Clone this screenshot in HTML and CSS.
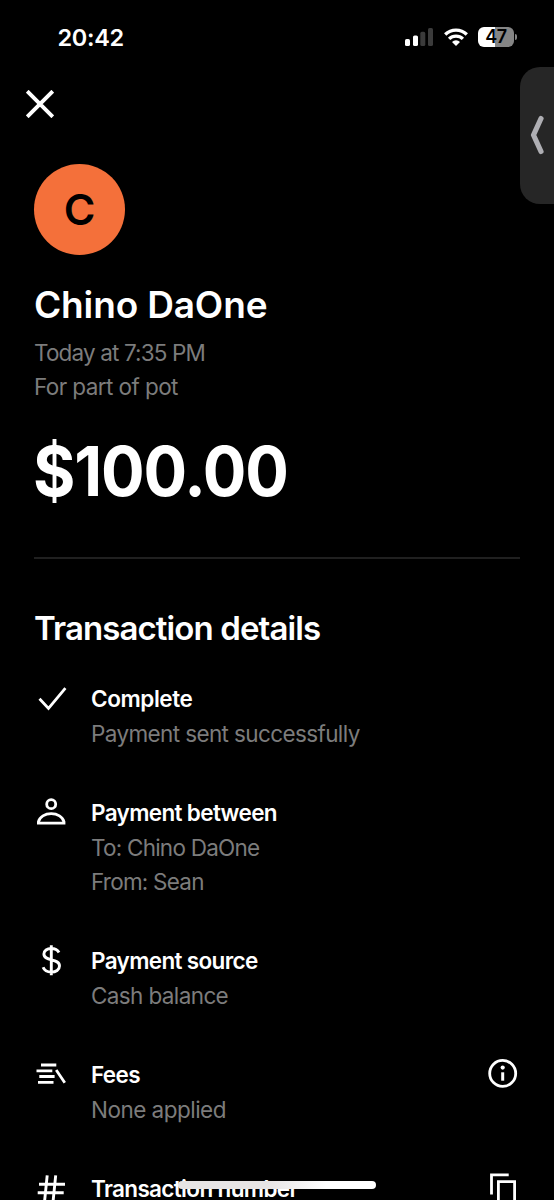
FILE: index.html
```html
<!DOCTYPE html>
<html lang="en">
<head>
<meta charset="utf-8">
<meta name="viewport" content="width=device-width, initial-scale=1">
<title>Transaction</title>
<link rel="stylesheet" href="styles.css">
</head>
<body>
<div class="screen">
  <header class="status">
    <span class="clock">20:42</span>
    <div class="indicators">
      <svg class="signal" width="28" height="18" viewBox="0 0 28 18" fill="#fff"><rect x="0" y="11" width="5" height="7" rx="1.6"/><rect x="8" y="7.5" width="5" height="10.5" rx="1.6"/><rect x="15.3" y="3.8" width="5" height="14.2" rx="1.6" fill="#3b3b3b"/><rect x="23" y="0" width="5" height="18" rx="1.6" fill="#3b3b3b"/></svg>
      <svg class="wifi" width="24" height="18" viewBox="0 0 24 18" fill="none" stroke="#fff" stroke-width="3.3"><path d="M1.2 6.5a15.3 15.3 0 0 1 21.6 0"/><path d="M5.1 10.9a9.8 9.8 0 0 1 13.8 0"/><path d="M12 18l-4-4a5.7 5.7 0 0 1 8 0z" fill="#fff" stroke="none"/></svg>
      <div class="battery"><span class="level">47</span><i class="cap"></i></div>
    </div>
  </header>
  <nav class="nav">
    <svg width="28" height="28" viewBox="0 0 28 28" stroke="#fff" stroke-width="3.9"><path d="M1.2 1.2l25.6 25.6M26.8 1.2L1.2 26.8"/></svg>
  </nav>
  <main class="content">
    <div class="avatar"><span>C</span></div>
    <h1 class="name">Chino DaOne</h1>
    <p class="sub when">Today at 7:35 PM</p>
    <p class="sub note">For part of pot</p>
    <div class="amount">$100.00</div>
    <hr class="rule">
    <h2 class="heading">Transaction details</h2>
    <ul class="list">
      <li class="item">
        <svg class="icon" width="34" height="34" viewBox="0 0 34 34" fill="none" stroke="#fff" stroke-width="2.8"><path d="M5.5 16.8l9 9.7L31.4 6.2"/></svg>
        <div class="text"><p class="label status-label">Complete</p><p class="sub">Payment sent successfully</p></div>
      </li>
      <li class="item">
        <svg class="icon" width="34" height="34" viewBox="0 0 34 34" fill="none" stroke="#fff" stroke-width="2.8"><circle cx="17.2" cy="8.2" r="4.5"/><path d="M4.4 27.2v-1.4C5.6 20.8 11 17.6 17.2 17.6S28.8 20.8 30 25.8v1.4z"/></svg>
        <div class="text"><p class="label">Payment between</p><p class="sub recipient">To: Chino DaOne</p><p class="sub sender">From: Sean</p></div>
      </li>
      <li class="item">
        <svg class="icon" width="34" height="34" viewBox="0 0 34 34" fill="none" stroke="#fff" stroke-width="2.9"><path d="M17.3 1.2v30M25 8.5C23.5 5.7 20.8 4.5 17.3 4.5c-4.2 0-7.4 2.2-7.4 5.6 0 7.8 15.6 3.8 15.6 12 0 3.6-3.6 6-8.2 6-4 0-6.9-1.5-8.2-4.8"/></svg>
        <div class="text"><p class="label">Payment source</p><p class="sub">Cash balance</p></div>
      </li>
      <li class="item">
        <svg class="icon" width="34" height="34" viewBox="0 0 34 34" fill="none" stroke="#fff" stroke-width="2.8"><path d="M7 7h15.3M2.5 12.8h15.8M5.3 18.5h15.3M4 24.3h15.5M22.2 12l8.6 12.7"/></svg>
        <div class="text"><p class="label">Fees</p><p class="sub fee-note">None applied</p></div>
        <svg class="action" width="34" height="34" viewBox="0 0 34 34" fill="none" stroke="#fff" stroke-width="2.8"><circle cx="16.7" cy="15.4" r="13"/><path d="M16.7 14.3v8.4" stroke-width="3"/><circle cx="16.7" cy="9.6" r="2.1" fill="#fff" stroke="none"/></svg>
      </li>
      <li class="item">
        <svg class="icon" width="34" height="34" viewBox="0 0 34 34" fill="none" stroke="#fff" stroke-width="2.9"><path d="M13.2 3.3L10.3 32M21.7 3.3L18.8 32M5 12.2h26M3.7 20.7h26"/></svg>
        <div class="text"><p class="label">Transaction number</p></div>
        <svg class="action" width="34" height="34" viewBox="0 0 34 34" fill="none" stroke="#fff" stroke-width="2.8"><path d="M22.7 2.9H5.5v19.7"/><path d="M12.4 9.7h16.2v22H12.4z"/></svg>
      </li>
    </ul>
  </main>
  <div class="side-tab"><svg width="14" height="40" viewBox="0 0 14 40" fill="none" stroke="#aeaeb3" stroke-width="5.2" stroke-linecap="round" stroke-linejoin="round"><path d="M11 3.5L3.5 20 11 36.5"/></svg></div>
  <div class="home-bar"></div>
</div>
</body>
</html>
```
FILE: styles.css
```css
* { box-sizing: border-box; margin: 0; padding: 0; }
body { background: #000; color: #fff; font-family: Inter, "Liberation Sans", sans-serif; }
.screen { position: relative; width: 554px; height: 1200px; overflow: hidden; background: #000; white-space: nowrap; }
.status { display: flex; justify-content: space-between; height: 74px; padding: 0 40px 0 57.5px; align-items: center; }
.clock { font-size: 23.5px; font-weight: 600; letter-spacing: -0.3px; }
.indicators { display: flex; align-items: center; gap: 10px; }
.signal { margin-right: 1px; }
.battery { position: relative; width: 36px; height: 20px; border-radius: 6px; background: linear-gradient(90deg, #fff 47%, #858585 47%); display: flex; align-items: center; justify-content: center; }
.level { color: #000; font-size: 18px; font-weight: 600; letter-spacing: -0.5px; line-height: 20px; }
.cap { position: absolute; right: -3px; top: 7px; width: 2px; height: 6px; border-radius: 0 2px 2px 0; background: #858585; }
.nav { height: 90px; padding: 16px 0 0 26px; }
.nav svg { display: block; }
.content { padding: 0 34px; }
.avatar { width: 91px; height: 91px; padding-bottom: 2px; border-radius: 50%; background: #f4703a; color: #000; display: flex; align-items: center; justify-content: center; font-size: 43px; font-weight: 600; }
.name { margin-top: 28px; font-size: 37px; line-height: 44px; font-weight: 600; letter-spacing: -0.15px; }
.sub { font-size: 22.5px; line-height: 34.2px; font-weight: 400; letter-spacing: -0.62px; color: #7c7c7c; }
.when { margin-top: 8.5px; letter-spacing: -0.85px; }
.note { letter-spacing: -0.58px; }
.recipient, .sender { letter-spacing: -0.77px; }
.fee-note { letter-spacing: -0.52px; }
.amount { margin-top: 28px; margin-left: -1px; font-size: 68.5px; line-height: 80px; font-weight: 700; letter-spacing: -1.2px; transform: scaleX(0.945); transform-origin: 0 50%; }
.rule { border: 0; height: 2px; margin-top: 45px; background: #202020; }
.heading { margin-top: 49px; font-size: 33px; line-height: 40px; font-weight: 600; letter-spacing: -0.9px; }
.list { list-style: none; margin-top: 34px; display: flex; flex-direction: column; gap: 45.6px; }
.item { display: flex; align-items: flex-start; }
.icon { width: 34px; flex: none; margin-right: 23px; }
.text { flex: 1; padding-top: 0.5px; margin-bottom: -0.6px; }
.label { font-size: 22.5px; line-height: 34.2px; font-weight: 600; letter-spacing: -0.65px; }
.status-label { letter-spacing: -0.42px; }
.action { flex: none; }
.side-tab { position: absolute; left: 520px; top: 67px; width: 40px; height: 137px; border-radius: 20px 0 0 20px; background: #262626; padding: 48px 0 0 10px; }
.home-bar { position: absolute; left: 178px; top: 1181px; width: 198px; height: 8px; border-radius: 4px; background: linear-gradient(90deg, #e6e4e4 45%, #fff 75%); }
```
